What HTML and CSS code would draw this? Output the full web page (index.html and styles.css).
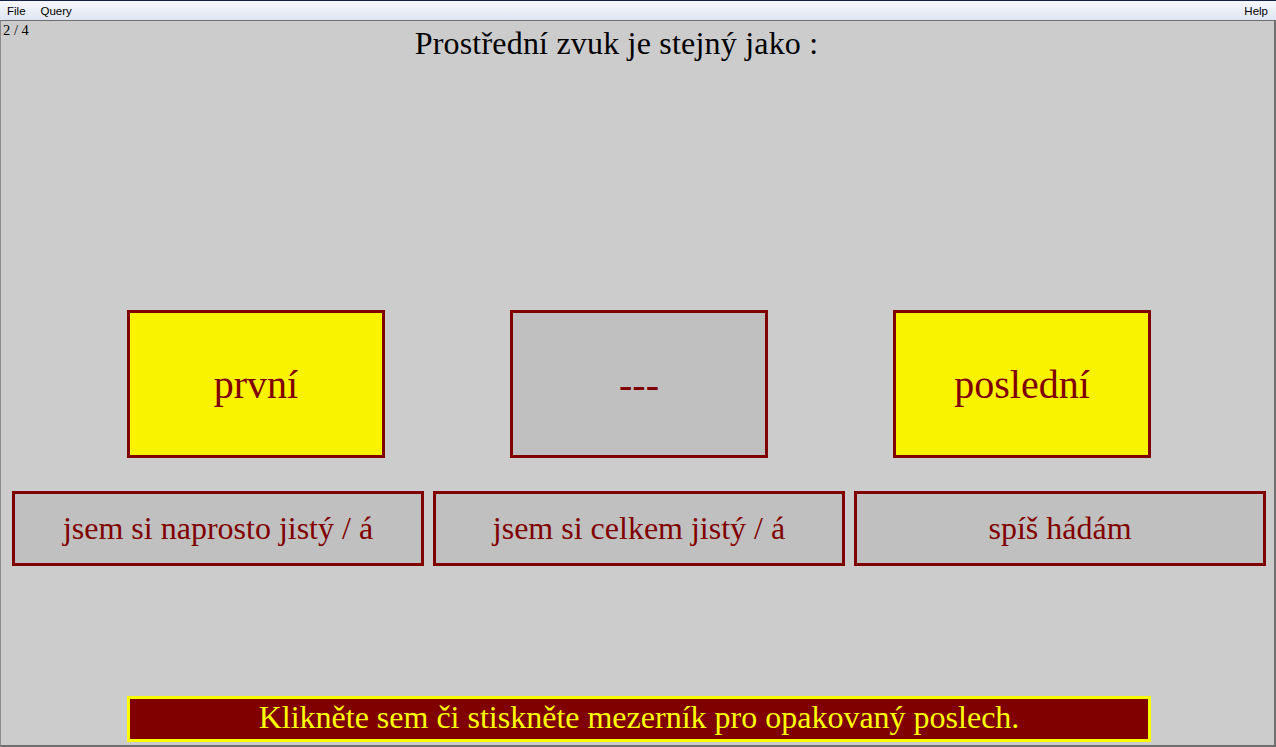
FILE: index.html
```html
<!DOCTYPE html>
<html lang="cs">
<head>
<meta charset="utf-8">
<title>Test</title>
<link rel="stylesheet" href="styles.css">
</head>
<body>
<div class="menubar">
  <div class="menu-left">
    <span class="menu-item">File</span>
    <span class="menu-item">Query</span>
  </div>
  <span class="menu-item">Help</span>
</div>
<div class="main">
  <div class="counter">2 / 4</div>
  <h1 class="title">Prostřední zvuk je stejný jako :</h1>
  <div class="choices">
    <div class="choice choice-yellow">první</div>
    <div class="choice choice-gray">---</div>
    <div class="choice choice-yellow">poslední</div>
  </div>
  <div class="confidence">
    <div class="conf">jsem si naprosto jistý / á</div>
    <div class="conf">jsem si celkem jistý / á</div>
    <div class="conf">spíš hádám</div>
  </div>
  <div class="replay">Klikněte sem či stiskněte mezerník pro opakovaný poslech.</div>
</div>
</body>
</html>
```

FILE: styles.css
```css
html, body {
  margin: 0;
  padding: 0;
}
body {
  width: 1276px;
  height: 747px;
  overflow: hidden;
  font-family: "Liberation Serif", "Times New Roman", serif;
  background: #cccccc;
}
.menubar {
  height: 20px;
  border-top: 1px solid #15204a;
  background: linear-gradient(#f6f8fc, #dfe5f2);
  display: flex;
  justify-content: space-between;
  align-items: center;
  font-family: "Liberation Sans", Arial, sans-serif;
  font-size: 11.5px;
  color: #000;
  padding: 0 8px 0 7px;
  box-sizing: border-box;
}
.menu-left {
  display: flex;
  gap: 15px;
}
.menu-item {
  line-height: 18px;
}
.main {
  position: relative;
  height: 727px;
  box-sizing: border-box;
  border-top: 1px solid #6e6e6e;
  border-left: 1px solid #8a8a8a;
  border-right: 2px solid #6e6e6e;
  border-bottom: 2px solid #6e6e6e;
  background: #cccccc;
  display: flex;
  flex-direction: column;
}
.counter {
  position: absolute;
  left: 2px;
  top: 2px;
  font-size: 14.5px;
  line-height: 15px;
  color: #000;
}
.title {
  margin: 4px 0 0;
  padding-right: 42px;
  font-weight: normal;
  font-size: 32px;
  line-height: 36px;
  letter-spacing: 0.2px;
  text-align: center;
  color: #000;
}
.choices {
  margin-top: 249px;
  display: flex;
  gap: 125px;
  padding-left: 126px;
}
.choice {
  width: 258px;
  height: 148px;
  box-sizing: border-box;
  border: 3px solid #800000;
  display: flex;
  align-items: center;
  justify-content: center;
  font-size: 40px;
  color: #800000;
}
.choice-yellow {
  background: #f9f300;
}
.choice-gray {
  background: #c0c0c0;
}
.confidence {
  margin-top: 33px;
  display: flex;
  gap: 9px;
  padding-left: 11px;
}
.conf {
  width: 412px;
  height: 75px;
  box-sizing: border-box;
  border: 3px solid #800000;
  background: #c0c0c0;
  display: flex;
  align-items: center;
  justify-content: center;
  font-size: 32px;
  color: #800000;
}
.replay {
  margin: auto 0 3px 126px;
  width: 1024px;
  height: 46px;
  box-sizing: border-box;
  border: 3px solid #ffff00;
  background: #800000;
  color: #ffff00;
  font-size: 32px;
  line-height: 36px;
  text-align: center;
}
```
